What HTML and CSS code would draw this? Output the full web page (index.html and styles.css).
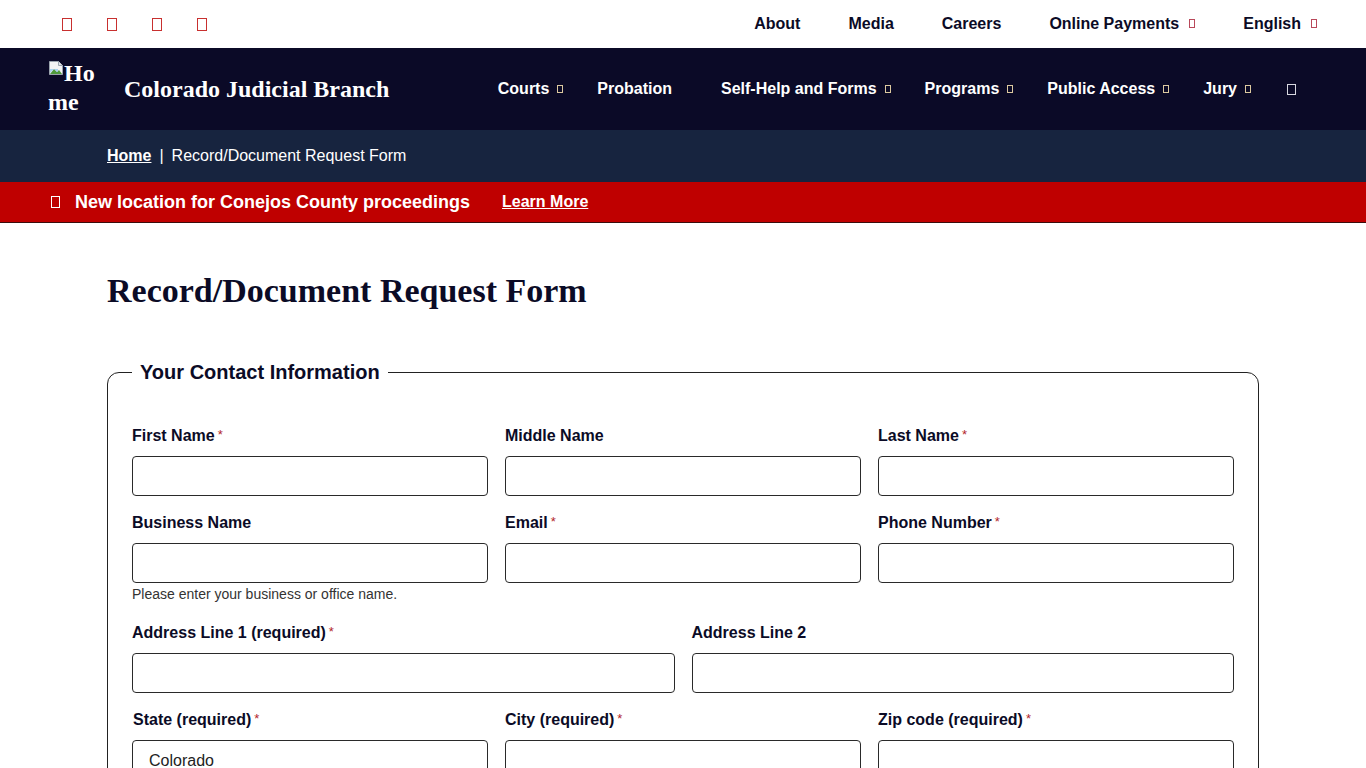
FILE: index.html
```html
<!DOCTYPE html>
<html lang="en">
<head>
	<meta charset="UTF-8">
	<title>Record/Document Request Form | Colorado Judicial Branch</title>
	<link rel="stylesheet" href="styles.css">
</head>
<body>
	<div class="topbar">
		<ul class="social">
			<li><a href="javascript:;" class="tofu"></a></li>
			<li><a href="javascript:;" class="tofu"></a></li>
			<li><a href="javascript:;" class="tofu"></a></li>
			<li><a href="javascript:;" class="tofu"></a></li>
		</ul>
		<ul class="utility">
			<li><a href="javascript:;">About</a></li>
			<li><a href="javascript:;">Media</a></li>
			<li><a href="javascript:;">Careers</a></li>
			<li><a href="javascript:;">Online Payments<span class="caret"></span></a></li>
			<li><a href="javascript:;">English<span class="caret"></span></a></li>
		</ul>
	</div>

	<header class="mainbar">
		<a href="javascript:;" class="logo">
			<span class="broken">
				<svg width="16" height="16" viewBox="0 0 16 16">
					<path d="M1.5 1.5h9l4 4v9h-13z" fill="#f4f4f4" stroke="#9aa3ad"/>
					<path d="M10.5 1.5v4h4" fill="#dfe3e8" stroke="#9aa3ad"/>
					<path d="M2 14l4-5 3 3 2-2 3 4z" fill="#4f9a3c"/>
					<path d="M2 9h8v3l-1 0-3-3-4 4z" fill="#8dc3ec" opacity=".7"/>
				</svg>Home</span>
		</a>
		<span class="site-name">Colorado Judicial Branch</span>
		<ul class="nav">
			<li><a href="javascript:;">Courts<span class="caret"></span></a></li>
			<li class="plain"><a href="javascript:;">Probation</a></li>
			<li><a href="javascript:;">Self-Help and Forms<span class="caret"></span></a></li>
			<li><a href="javascript:;">Programs<span class="caret"></span></a></li>
			<li><a href="javascript:;">Public Access<span class="caret"></span></a></li>
			<li><a href="javascript:;">Jury<span class="caret"></span></a></li>
			<li class="search-item"><a href="javascript:;" class="search"></a></li>
		</ul>
	</header>

	<div class="crumbs">
		<div class="wrap"><a href="javascript:;">Home</a><span class="sep">|</span>Record/Document Request Form</div>
	</div>

	<div class="alert">
		<span class="alert-icon"></span>
		<strong>New location for Conejos County proceedings</strong>
		<a href="javascript:;">Learn More</a>
	</div>

	<main class="wrap">
		<h1>Record/Document Request Form</h1>

		<form>
			<fieldset>
				<legend>Your Contact Information</legend>

				<div class="row three">
					<div class="field">
						<label>First Name<span class="req">*</span></label>
						<input type="text">
					</div>
					<div class="field">
						<label>Middle Name</label>
						<input type="text">
					</div>
					<div class="field">
						<label>Last Name<span class="req">*</span></label>
						<input type="text">
					</div>
				</div>

				<div class="row three">
					<div class="field">
						<label>Business Name</label>
						<input type="text">
						<div class="help">Please enter your business or office name.</div>
					</div>
					<div class="field">
						<label>Email<span class="req">*</span></label>
						<input type="email">
					</div>
					<div class="field">
						<label>Phone Number<span class="req">*</span></label>
						<input type="tel">
					</div>
				</div>

				<div class="row two">
					<div class="field">
						<label>Address Line 1 (required)<span class="req">*</span></label>
						<input type="text">
					</div>
					<div class="field">
						<label>Address Line 2</label>
						<input type="text">
					</div>
				</div>

				<div class="row three">
					<div class="field">
						<label class="nudge">State (required)<span class="req">*</span></label>
						<select>
							<option>Colorado</option>
						</select>
					</div>
					<div class="field">
						<label>City (required)<span class="req">*</span></label>
						<input type="text">
					</div>
					<div class="field">
						<label>Zip code (required)<span class="req">*</span></label>
						<input type="text">
					</div>
				</div>
			</fieldset>
		</form>
	</main>
</body>
</html>
```

FILE: styles.css
```css
* {margin: 0;padding: 0;box-sizing: border-box;}
ul {list-style: none;}
a {color: inherit;text-decoration: none;}
body {font-family: "Liberation Sans", Arial, sans-serif;font-size: 16px;color: #0b0b26;background: #fff;}

/* top utility bar */
.topbar {height: 48px;display: flex;align-items: center;justify-content: space-between;padding: 0 49px 0 62px;}
.social {display: flex;gap: 35px;}
.tofu {display: block;width: 10px;height: 13px;border: 1px solid #c8302f;}
.utility {display: flex;gap: 48px;font-weight: bold;}
.utility .caret {border-color: #b9485a;margin-left: 10px;width: 6px;height: 9px;}
.caret {display: inline-block;width: 6px;height: 8px;border: 1px solid #dcc9a0;margin-left: 8px;vertical-align: 1px;}

/* main header */
.mainbar {height: 82px;background: #0b0a27;color: #fff;display: flex;align-items: center;padding: 0 70px 0 48px;}
.logo {width: 48px;font-family: "Liberation Serif", "Times New Roman", serif;font-size: 24px;font-weight: bold;line-height: 29px;word-break: break-all;align-self: flex-start;margin-top: 11px;}
.broken svg {vertical-align: top;margin-top: 1px;}
.site-name {font-family: "Liberation Serif", "Times New Roman", serif;font-size: 24px;font-weight: bold;margin-left: 28px;}
.nav {display: flex;gap: 34px;margin-left: auto;font-weight: bold;}
.nav .plain {margin-right: 15px;}
.nav .search-item {margin-left: 2px;}
.search {display: inline-block;width: 9px;height: 11px;border: 1px solid #d8d8e0;vertical-align: -1px;}

/* breadcrumb */
.crumbs {background: #17243f;color: #fff;height: 52px;display: flex;align-items: center;}
.wrap {width: 1152px;margin: 0 auto;}
.crumbs a {font-weight: bold;text-decoration: underline;}
.crumbs .sep {margin: 0 8px;}

/* alert */
.alert {background: #bf0000;color: #fff;height: 41px;border-bottom: 1px solid #3a0d0d;display: flex;align-items: center;padding-left: 51px;}
.alert-icon {width: 9px;height: 12px;border: 1px solid #fff;margin-right: 15px;}
.alert strong {font-size: 18px;}
.alert a {font-weight: bold;text-decoration: underline;margin-left: 32px;}

/* page */
main {padding-top: 48px;padding-bottom: 60px;}
h1 {font-family: "Liberation Serif", "Times New Roman", serif;font-size: 34px;font-weight: bold;line-height: 39px;}

fieldset {margin-top: 51px;border: 1px solid #222;border-radius: 12px;padding: 42px 24px 10px;}
legend {font-size: 20px;font-weight: bold;padding: 0 8px;line-height: 23px;}

.row {display: grid;gap: 17px;}
.row.three {grid-template-columns: repeat(3, 1fr);}
.row.two {grid-template-columns: repeat(2, 1fr);}
.field {margin-bottom: 17px;}
label {display: block;font-weight: bold;line-height: 20px;margin-bottom: 10px;}
label.nudge {padding-left: 1px;}
.req {color: #b3262a;font-weight: normal;font-size: 13px;vertical-align: 2px;margin-left: 3px;line-height: 14px;}
input, select {display: block;width: 100%;height: 40px;border: 1px solid #2a2a2a;border-radius: 4px;font-family: inherit;font-size: 16px;color: #222;background: #fff;padding: 0 16px;}
select {appearance: none;-webkit-appearance: none;}
.help {font-size: 14px;color: #333;line-height: 20px;margin: 1px 0 2px;}
```
